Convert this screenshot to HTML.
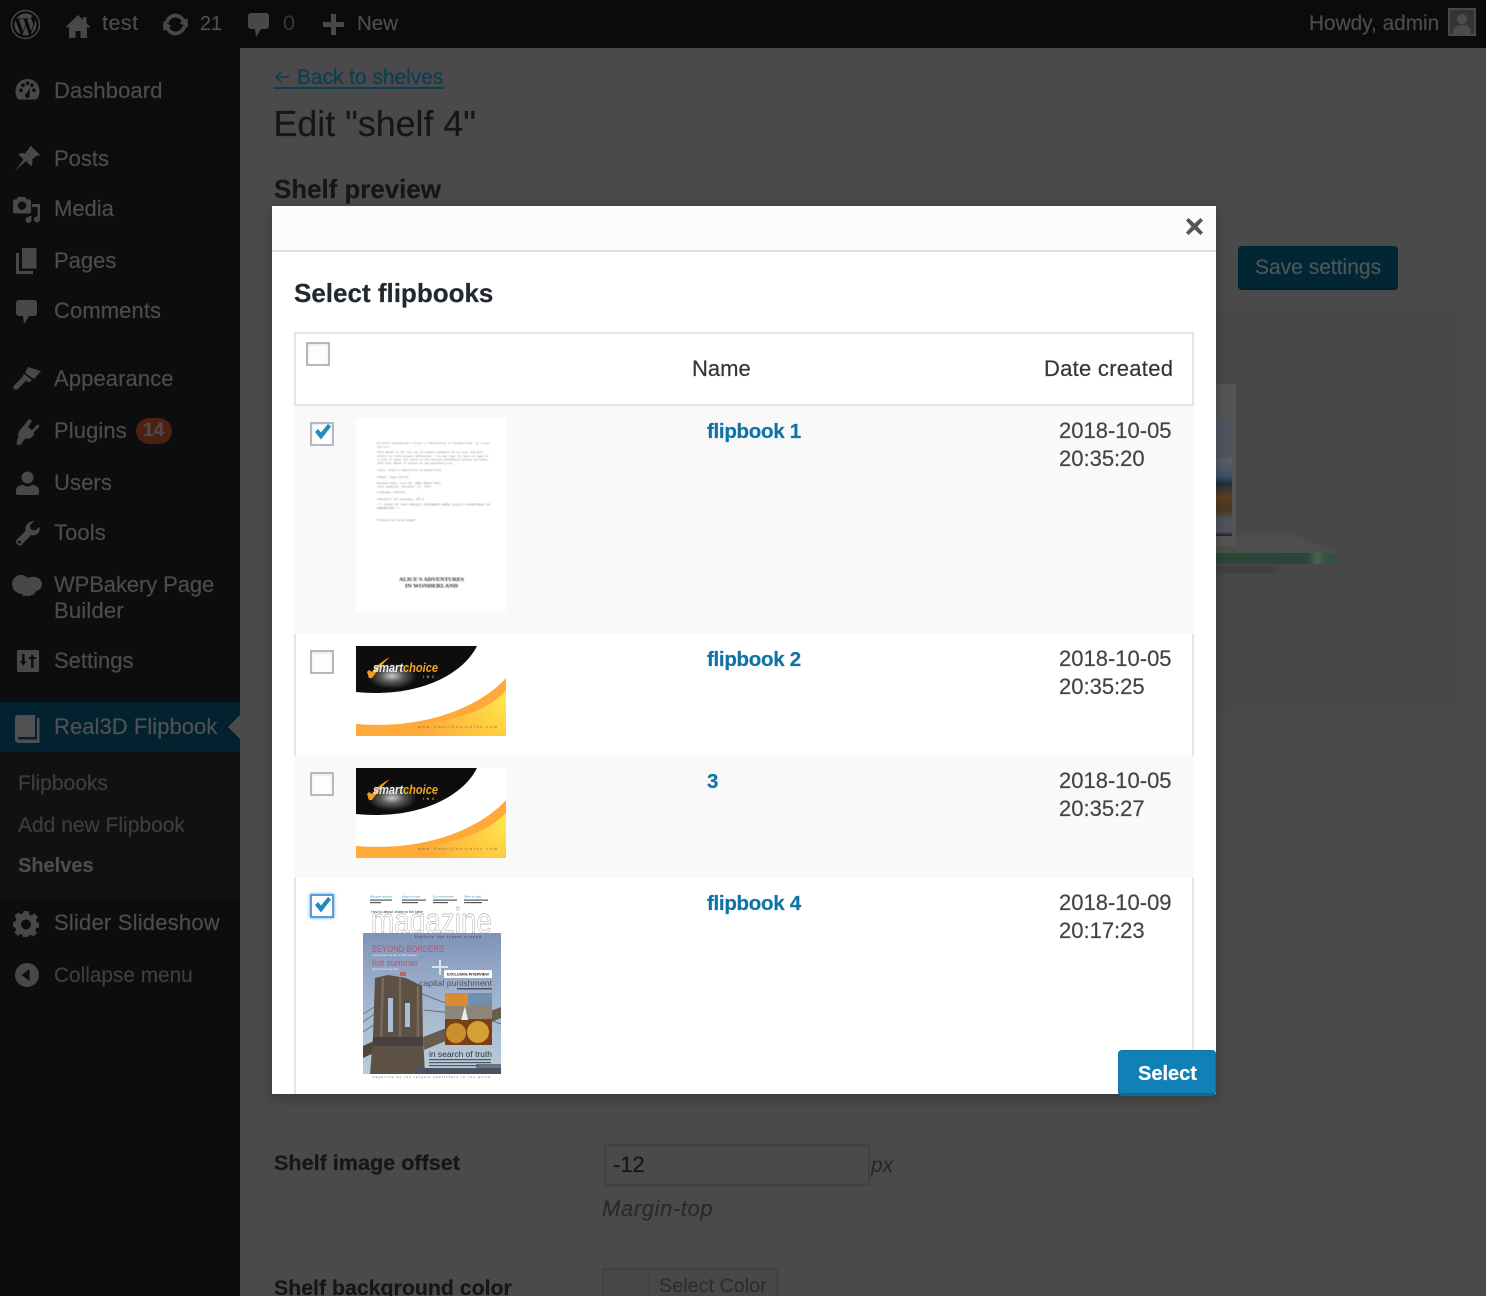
<!DOCTYPE html>
<html><head><meta charset="utf-8"><title>Edit shelf</title>
<style>
html,body{margin:0;padding:0;width:1486px;height:1296px;overflow:hidden;background:#4a4a4a}
body{position:relative;font-family:"Liberation Sans","DejaVu Sans",sans-serif}
.t{position:absolute;white-space:nowrap;line-height:30px;height:30px;-webkit-text-stroke:.2px}
.m{font-size:22px;color:#4b4c4e}
.s{font-size:21px;color:#3c3d3f}
.i{position:absolute;fill:#47484a}
.b{position:absolute;left:0;top:0}
.cb{position:absolute;width:20px;height:20px;border:2px solid #b4b9be;background:#fdfdfd;box-shadow:inset 0 1px 2px rgba(0,0,0,.1)}
.cb svg{position:absolute;left:0;top:0;overflow:visible}
.row{position:absolute;left:294px;width:900px;box-sizing:border-box}
.lnk{font-size:20.5px;font-weight:bold;color:#0f73a5;letter-spacing:-.3px}
.d{font-size:22px;color:#444}
</style></head><body>

<!-- admin bar -->
<div class="b" style="width:1486px;height:48px;background:#0a0b0d"></div>
<!-- sidebar -->
<div class="b" style="top:48px;width:240px;height:1248px;background:#0c0d0f"></div>
<div class="b" style="top:702px;width:240px;height:50px;background:#03222f"></div>
<div class="b" style="top:752px;width:240px;height:146px;background:#101113"></div>
<svg class="b" style="left:228px;top:715px" width="12" height="24"><path d="M12 0L0 12L12 24Z" fill="#4a4a4a"/></svg>

<!-- admin bar icons -->
<svg class="i" style="left:10px;top:9px" width="31" height="31" viewBox="0 0 31 31"><circle cx="15.5" cy="15.5" r="14" fill="none" stroke="#47484a" stroke-width="1.4"/><path d="M4.5 15.5c0 4.4 2.6 8.2 6.3 10L5.5 11.2a11 11 0 0 0-1 4.3zM23 15c0-1.400-.5-2.300-.9-3-.6-.9-1.100-1.700-1.100-2.600 0-1 .8-2 1.900-2h.2A11 11 0 0 0 6.500 9.500h.7c1.200 0 3-.1 3-.1.600 0 .7.800.1.900 0 0-.6.100-1.300.1l4 12 2.500-7.300-1.800-4.700c-.6 0-1.200-.1-1.200-.1-.6 0-.5-1-.0-.9 0 0 1.800.1 2.900.1s3-.1 3-.1c.6 0 .7.800.1.900 0 0-.6.100-1.300.1l4 11.900 1.100-3.600c.5-1.500.8-2.600.8-3.600zM15.700 16.500l-3.300 9.600a11 11 0 0 0 6.800-.2l-.1-.1zM25 10.300c0 .4.100.8.100 1.200 0 1.100-.2 2.400-.8 4l-3.400 9.700A11 11 0 0 0 25 10.300z"/></svg>
<svg class="i" style="left:66px;top:14px" width="24" height="24" viewBox="0 0 24 24"><path d="M12 1L0 12.500l1.500 1.500L3 12.700V24h6.500v-7h5v7H21V12.700l1.500 1.300 1.500-1.500-3.500-3.300V3h-3.500v3z"/></svg>
<svg class="i" style="left:162px;top:13px" width="27" height="23" viewBox="3 2 21 19"><path d="M13.500 2.500c3.400 0 6.300 2 7.700 4.900l2.300-1.400.2 8-6.900-3.800 2-1.200c-1-2-3-3.300-5.300-3.300-2.900 0-5.300 2.100-5.900 4.900L4.500 9.900C5.700 5.700 9.200 2.500 13.500 2.500zM22.500 13.100c-1.200 4.200-4.700 7.400-9 7.400-3.400 0-6.300-2-7.700-4.900l-2.300 1.400-.2-8 6.900 3.800-2 1.200c1 2 3 3.300 5.300 3.300 2.900 0 5.300-2.100 5.900-4.900z"/></svg>
<svg class="i" style="left:248px;top:13px" width="21" height="24" viewBox="0 0 21 24"><path d="M3 0h15a3 3 0 0 1 3 3v10a3 3 0 0 1-3 3h-5l-5 8-1-8H3a3 3 0 0 1-3-3V3a3 3 0 0 1 3-3z"/></svg>
<svg class="i" style="left:323px;top:14px" width="21" height="21" viewBox="0 0 21 21"><path d="M8 0h5v8h8v5h-8v8H8v-8H0V8h8z"/></svg>

<div class="t" style="left:102px;top:8px;font-size:21.5px;color:#4b4c4e;letter-spacing:.5px">test</div>
<div class="t" style="left:200px;top:9px;font-size:20px;color:#4b4c4e;letter-spacing:-.2px">21</div>
<div class="t" style="left:283px;top:8px;font-size:21.5px;color:#333436">0</div>
<div class="t" style="left:357px;top:9px;font-size:20.5px;color:#4b4c4e">New</div>
<div class="t" style="left:1309px;top:9px;font-size:20.8px;color:#4b4c4e">Howdy, admin</div>
<div class="b" style="left:1448px;top:8px;width:28px;height:28px;background:#47484a;overflow:hidden">
<svg width="28" height="28" viewBox="0 0 28 28"><rect x="2" y="2" width="24" height="24" fill="#333436"/><circle cx="14" cy="11" r="5" fill="#4c4c4d"/><path d="M5 26c0-7 4-9 9-9s9 2 9 9z" fill="#4c4c4d"/></svg></div>

<!-- sidebar icons -->
<svg class="i" style="left:15px;top:79px" width="25" height="22" viewBox="0 0 25 22"><path d="M12.500 0A12 12 0 0 0 .5 12c0 3.500 1.200 6.500 3 8.500h18c1.800-2 3-5 3-8.500a12 12 0 0 0-12-12zM6 13a1.800 1.800 0 1 1 0-3.600A1.800 1.800 0 0 1 6 13zm2-5a1.800 1.800 0 1 1 0-3.600A1.800 1.800 0 0 1 8 8zm4.500-2a1.800 1.800 0 1 1 0-3.600 1.800 1.800 0 0 1 0 3.600zm2 12a2.500 2.500 0 0 1-4.500-1.500c0-1.500 1.500-2.300 2-2.800l3-5-.5 6c0 1 .5 2 0 3.300zM17 8a1.800 1.800 0 1 1 0-3.600A1.800 1.800 0 0 1 17 8zm2 5a1.800 1.800 0 1 1 0-3.600 1.800 1.800 0 0 1 0 3.600z"/></svg>
<svg class="i" style="left:14px;top:146px" width="26" height="26" viewBox="0 0 26 26"><path d="M17 0l9 9-2 1-1-.5-5 4c1 2.500.5 5-1 6.500l-5-5L1 25l8.500-11.500-5-5c1.500-1.500 4-2 6.500-1l4-5L15 1.500z"/></svg>
<svg class="i" style="left:13px;top:197px" width="28" height="28" viewBox="0 0 28 28"><path d="M5 0h7l2 2.500h2a2 2 0 0 1 2 2v10a2 2 0 0 1-2 2H2a2 2 0 0 1-2-2v-10a2 2 0 0 1 2-2h1.500zM9 4.500a4.200 4.200 0 1 0 0 8.400 4.200 4.200 0 0 0 0-8.400z"/><path d="M19 7h8v15.500a3 3 0 1 1-2.500-3V10H19z"/><path d="M18.500 19v4a3 3 0 1 1-2.500-3v-1z"/></svg>
<svg class="i" style="left:16px;top:248px" width="21" height="26" viewBox="0 0 21 26"><path d="M6 0h14.500v20.500H6z"/><path d="M0 5h3v18h14v3H0z"/></svg>
<svg class="i" style="left:16px;top:300px" width="21" height="24" viewBox="0 0 21 24"><path d="M3 0h15a3 3 0 0 1 3 3v10a3 3 0 0 1-3 3h-5l-5 8-1-8H3a3 3 0 0 1-3-3V3a3 3 0 0 1 3-3z"/></svg>
<svg class="i" style="left:13px;top:367px" width="28" height="24" viewBox="0 0 28 24"><path d="M15 0l13 4-7 8-9-6zM11 7l8 6-3 2.500-3-2L5 22a3 3 0 0 1-4.500-.5C0 20.500 0 19.500 1 18.500L9 10.500z"/></svg>
<svg class="i" style="left:15px;top:419px" width="25" height="26" viewBox="0 0 25 26"><path d="M14 0l3 2-4 6 4 3 6-6 1.500 2.500-6 6 1 1c-2 4-5 6-9 5l-1 1-4 5.500-4-.5 1-6 1-1c-1-3 0-6 2-8z"/></svg>
<svg class="i" style="left:16px;top:471px" width="23" height="24" viewBox="0 0 23 24"><circle cx="11.500" cy="6.500" r="6"/><path d="M0 19c0-3 3-4.500 7-5.500 1 1.500 3 2 4.500 2s3.500-.5 4.500-2c4 1 7 2.500 7 5.500v3a2 2 0 0 1-2 2H2a2 2 0 0 1-2-2z"/></svg>
<svg class="i" style="left:15px;top:521px" width="25" height="25" viewBox="0 0 25 25"><path d="M19 0l-4 4.500 1 4 4 1L24.500 6c.5 3-.5 6-3 7.500-2 1-4 1-5.500.5L7 23.500a3.200 3.200 0 0 1-5-.5c-1-1-1.200-3 0-4.500L10.500 10C10 8 10.200 5.500 12 3.500 14 1 16.500 0 19 0zM4.500 19.500a1.500 1.500 0 1 0 0 3 1.500 1.500 0 0 0 0-3z"/></svg>
<svg class="i" style="left:12px;top:575px" width="30" height="24" viewBox="0 0 30 24"><path d="M9 0c3 0 5 1 6.500 3 2-1 5-1.500 8-1 4 1 6.500 4 6.500 7 0 4-3 6.500-6 7-1 3-3 4.500-5 4-1 1-3 1.500-5 .5-1 .5-3 1-4 .5l1.500-1.500C7 19 3.500 17.500 1.500 14 0 11.500-.5 8 1 5 2.500 2 5.500 0 9 0z"/></svg>
<svg class="i" style="left:17px;top:650px" width="22" height="22" viewBox="0 0 22 22"><path fill-rule="evenodd" d="M1 0h20a1 1 0 0 1 1 1v20a1 1 0 0 1-1 1H1a1 1 0 0 1-1-1V1a1 1 0 0 1 1-1zM5 4v7H3l3.200 5 3.200-5H7.500V4zM14 5v2h-2v2h2v9h2.500V9H19V7h-2.500V5z"/></svg>
<svg class="i" style="left:15px;top:715px;fill:#4f5052" width="25" height="28" viewBox="0 0 25 28"><path d="M3 0h17v22H4.500c-2 0-2 2.500 0 2.500H22V3h2.500v25H4c-2.500 0-4-1.500-4-4V3a3 3 0 0 1 3-3z"/></svg>
<svg class="i" style="left:13px;top:911px" width="26" height="26" viewBox="0 0 26 26"><path fill-rule="evenodd" d="M10.500 0h5l.7 3.500 2.300 1L21.500 2.500 25 6l-2.200 3 1 2.300L26 11.500v5l-2.700.5-1 2.300L24 22l-3.500 3.500-2.700-1.800-2.300 1-.5 1.300h-5l-.5-2.300-2.300-1L5 25l-3.500-3.500 1.700-2.700-1-2.300L0 16v-5l2.300-.5 1-2.300L1.500 5 5 1.500l2.700 1.800 2.300-1zM13 8.500a5 5 0 1 0 0 10 5 5 0 0 0 0-10z"/></svg>
<svg class="i" style="left:15px;top:963px" width="24" height="24" viewBox="0 0 24 24"><path fill-rule="evenodd" d="M12 0a12 12 0 1 1 0 24 12 12 0 0 1 0-24zM14.500 6l-8 6 8 6z"/></svg>

<!-- sidebar text -->
<div class="t m" style="left:54px;top:76px;letter-spacing:.1px">Dashboard</div>
<div class="t m" style="left:54px;top:144px">Posts</div>
<div class="t m" style="left:54px;top:194px">Media</div>
<div class="t m" style="left:54px;top:246px">Pages</div>
<div class="t m" style="left:54px;top:296px;letter-spacing:.1px">Comments</div>
<div class="t m" style="left:54px;top:364px;letter-spacing:.1px">Appearance</div>
<div class="t m" style="left:54px;top:416px;letter-spacing:.1px">Plugins</div>
<div class="b" style="left:136px;top:418px;width:36px;height:26px;border-radius:13px;background:#4d2012"></div>
<div class="t" style="left:143px;top:416px;font-size:19px;font-weight:bold;color:#4b4c4e">14</div>
<div class="t m" style="left:54px;top:468px;letter-spacing:.1px">Users</div>
<div class="t m" style="left:54px;top:518px;letter-spacing:.1px">Tools</div>
<div class="t m" style="left:54px;top:570px;letter-spacing:-.1px">WPBakery Page</div>
<div class="t m" style="left:54px;top:596px;letter-spacing:.2px">Builder</div>
<div class="t m" style="left:54px;top:646px">Settings</div>
<div class="t m" style="left:54px;top:712px;color:#505153;letter-spacing:.05px">Real3D Flipbook</div>
<div class="t s" style="left:18px;top:769px">Flipbooks</div>
<div class="t s" style="left:18px;top:811px">Add new Flipbook</div>
<div class="t s" style="left:18px;top:851px;font-size:20px;font-weight:bold;color:#4b4c4e">Shelves</div>
<div class="t m" style="left:54px;top:908px;letter-spacing:.2px">Slider Slideshow</div>
<div class="t s" style="left:54px;top:961px;font-size:20.8px;color:#3e3f41">Collapse menu</div>

<!-- page content behind overlay -->
<svg class="b" style="left:274px;top:70px" width="17" height="14" viewBox="0 0 17 14"><path d="M15.500 7H2M7.500 1.500L2 7l5.500 5.500" fill="none" stroke="#0a3d55" stroke-width="1.600"/></svg>
<div class="t" style="left:297px;top:63px;font-size:20.9px;color:#0a3d55">Back to shelves</div>
<div class="b" style="left:274px;top:87px;width:170px;height:2px;background:#0a3d55"></div>
<div class="t" style="left:273.5px;top:102px;font-size:35.8px;line-height:44px;height:44px;color:#151618">Edit "shelf 4"</div>
<div class="t" style="left:274px;top:175px;font-size:25.9px;font-weight:bold;color:#151618">Shelf preview</div>

<div class="b" style="left:1216px;top:310px;width:242px;height:400px;background:#484848"></div>
<div class="b" style="left:1216px;top:384px;width:20px;height:162px;background:#555"></div>
<div class="b" style="left:1216px;top:420px;width:16px;height:116px;background:linear-gradient(#4f5560,#4e545c 30%,#5a5e62 35%,#3f5266 48%,#1f2f3d 55%,#5b4021 66%,#4a3820 78%,#4c5258 85%,#50565c 96%,#222 100%)"></div>
<svg class="b" style="left:1216px;top:530px;overflow:visible" width="124" height="50" viewBox="0 0 124 50"><defs><filter id="bl"><feGaussianBlur stdDeviation="3"/></filter><linearGradient id="gl" x1="0" x2="1" y1="0" y2="0"><stop offset="0" stop-color="#2c4637"/><stop offset=".75" stop-color="#2a4535"/><stop offset=".84" stop-color="#4a6253"/><stop offset=".9" stop-color="#34533f"/><stop offset="1" stop-color="#35523f"/></linearGradient></defs>
<rect x="0" y="36" width="62" height="7" fill="#3c3c3c" filter="url(#bl)"/>
<path d="M20 5H79L121 23H0V16H20Z" fill="#4d4f4e"/><rect x="0" y="23" width="121" height="11" fill="url(#gl)"/></svg>

<div class="b" style="left:1238px;top:246px;width:160px;height:44px;box-sizing:border-box;border-radius:4px;background:#032634;border-bottom:3px solid #02202c"></div>
<div class="t" style="left:1255px;top:253px;font-size:21px;color:#4d5559">Save settings</div>

<div class="t" style="left:274px;top:1148px;font-size:21.6px;font-weight:bold;color:#151618">Shelf image offset</div>
<div class="b" style="left:604px;top:1144px;width:266px;height:42px;box-sizing:border-box;border:2px solid #414141;background:#4a4a4a"></div>
<div class="t" style="left:613px;top:1150px;font-size:22px;color:#151618">-12</div>
<div class="t" style="left:871px;top:1151px;font-size:21px;font-style:italic;color:#2a2a2a">px</div>
<div class="t" style="left:602px;top:1194px;font-size:22px;font-style:italic;color:#2a2a2a;letter-spacing:.6px">Margin-top</div>
<div class="t" style="left:274px;top:1273px;font-size:21.3px;font-weight:bold;color:#151618">Shelf background color</div>
<div class="b" style="left:602px;top:1268px;width:176px;height:40px;box-sizing:border-box;border:2px solid #414141;border-radius:4px;background:#484848"></div>
<div class="b" style="left:648px;top:1270px;width:2px;height:30px;background:#414141"></div>
<div class="t" style="left:659px;top:1271px;font-size:19.8px;color:#2e2e2e">Select Color</div>

<!-- modal -->
<div class="b" style="left:272px;top:206px;width:944px;height:888px;background:#fff;box-shadow:0 4px 12px rgba(0,0,0,.25);overflow:hidden">
  <div class="b" style="width:944px;height:44px;background:#fcfcfc;border-bottom:2px solid #ddd"></div>
</div>
<svg class="b" style="left:1186px;top:218px" width="17" height="17" viewBox="0 0 17 17"><path d="M2.500 0L8.500 5.500 14.500 0 17 2.500 11.500 8.500 17 14.500 14.500 17 8.500 11.500 2.500 17 0 14.500 5.500 8.500 0 2.500Z" fill="#555"/></svg>
<div class="t" style="left:294px;top:278px;font-size:26px;font-weight:bold;color:#23282d">Select flipbooks</div>

<!-- table head -->
<div class="row" style="top:332px;height:74px;border:2px solid #e5e5e5;background:#fff"></div>
<div class="cb" style="left:306px;top:342px"></div>
<div class="t" style="left:692px;top:354px;font-size:22px;color:#32373c">Name</div>
<div class="t" style="left:1044px;top:354px;font-size:22px;color:#32373c;letter-spacing:.27px">Date created</div>

<!-- rows -->
<div class="row" style="top:406px;height:228px;background:#f9f9f9"></div>
<div class="row" style="top:634px;height:122px;background:#fff;border-left:2px solid #e5e5e5;border-right:2px solid #e5e5e5"></div>
<div class="row" style="top:756px;height:122px;background:#f9f9f9"></div>
<div class="row" style="top:878px;height:216px;background:#fff;border-left:2px solid #e5e5e5;border-right:2px solid #e5e5e5"></div>

<div class="cb" style="left:310px;top:422px"><svg width="20" height="20" viewBox="0 0 20 20"><path d="M3 8l3-3 3 3.500L16 0l3 2.500L9 15.500z" fill="#1e8cbe"/></svg></div>
<div class="cb" style="left:310px;top:650px"></div>
<div class="cb" style="left:310px;top:772px"></div>
<div class="cb" style="left:310px;top:894px;border-color:#5b9dd9;box-shadow:0 0 3px rgba(30,140,190,.8)"><svg width="20" height="20" viewBox="0 0 20 20"><path d="M3 9l3-3 3 3.500L16 1l3 2.500L9 16.500z" fill="#1e8cbe"/></svg></div>

<!-- thumb 1 -->
<div class="b" style="left:356px;top:418px;width:150px;height:194px;background:#fff;overflow:hidden">
<svg width="150" height="194" viewBox="0 0 150 194" style="font-family:'Liberation Mono',monospace;font-size:3.100px;fill:#8c8c8c;filter:blur(.4px)">
<text x="21" y="26" textLength="113">Project Gutenberg's Alice's Adventures in Wonderland, by Lewis</text><text x="21" y="30">Carroll</text>
<text x="21" y="35" textLength="106">This eBook is for the use of anyone anywhere at no cost and with</text><text x="21" y="39" textLength="112">almost no restrictions whatsoever. You may copy it, give it away or</text><text x="21" y="42.500" textLength="110">re-use it under the terms of the Project Gutenberg License included</text><text x="21" y="46" textLength="75">with this eBook or online at www.gutenberg.org</text>
<text x="21" y="53" textLength="64">Title: Alice's Adventures in Wonderland</text><text x="21" y="60" textLength="32">Author: Lewis Carroll</text><text x="21" y="66" textLength="64">Release Date: June 25, 2008 [EBook #11]</text><text x="21" y="69.500" textLength="54">Last updated: December 17, 2014</text><text x="21" y="75" textLength="28">Language: English</text><text x="21" y="82" textLength="47">Character set encoding: UTF-8</text><text x="21" y="87.500" textLength="113">*** START OF THIS PROJECT GUTENBERG EBOOK ALICE'S ADVENTURES IN</text><text x="21" y="91" textLength="24">WONDERLAND ***</text><text x="21" y="103" textLength="39">Produced by David Widger</text>
<text x="43" y="163" textLength="65" lengthAdjust="spacingAndGlyphs" style="font:bold 5.400px 'Liberation Serif',serif;fill:#222">ALICE'S ADVENTURES</text><text x="49" y="169.500" textLength="53" lengthAdjust="spacingAndGlyphs" style="font:bold 5.400px 'Liberation Serif',serif;fill:#222">IN WONDERLAND</text>
</svg></div>

<!-- thumb 2 / 3 -->
<svg class="b" style="left:356px;top:646px" width="150" height="90" viewBox="0 0 150 90">
<defs>
<radialGradient id="y" gradientUnits="userSpaceOnUse" cx="150" cy="55" r="85"><stop offset="0" stop-color="#ffe64a"/><stop offset=".45" stop-color="#ffc83f"/><stop offset="1" stop-color="#ffab3a"/></radialGradient>
<radialGradient id="g" cx=".5" cy=".5" r=".5"><stop offset="0" stop-color="#c4c8c8"/><stop offset=".45" stop-color="#5a5c5c"/><stop offset="1" stop-color="#0c0c0c"/></radialGradient>
<filter id="sf"><feGaussianBlur stdDeviation=".25"/></filter>
<g id="card" filter="url(#sf)">
<rect width="150" height="90" fill="#fff"/>
<path d="M0 0H121C106 30 60 52 0 46Z" fill="#0c0c0c"/>
<ellipse cx="36" cy="30" rx="25" ry="13" fill="url(#g)"/>
<path d="M0 78C70 84 125 60 150 32V90H0Z" fill="#ffa93a"/>
<path d="M0 81C70 84 130 70 150 44V90H0Z" fill="url(#y)"/>
<path d="M11 26L13 24 16 26Q22 17 34 11 24 20 16 32L13 32Z" fill="#f39c1f"/>
<text x="17" y="26" style="font:italic bold 13px 'Liberation Sans',sans-serif;fill:#eee" textLength="30" lengthAdjust="spacingAndGlyphs">smart</text>
<text x="47" y="26" style="font:italic bold 13px 'Liberation Sans',sans-serif;fill:#f5a623" textLength="35" lengthAdjust="spacingAndGlyphs">choice</text>
<text x="67" y="32" style="font:bold 3.500px 'Liberation Sans',sans-serif;fill:#f5a623" textLength="15">INC.</text>
<text x="62" y="82" style="font:3.500px 'Liberation Sans',sans-serif;fill:#7a6a3a" textLength="79">www.SmartChoiceInc.com</text>
</g></defs>
<use href="#card"/></svg>
<svg class="b" style="left:356px;top:768px" width="150" height="90" viewBox="0 0 150 90"><use href="#card"/></svg>

<!-- thumb 4 -->
<svg class="b" style="left:356px;top:894px;filter:blur(.35px)" width="150" height="190" viewBox="0 0 150 190">
<defs><linearGradient id="sky" x1="0" y1="0" x2="0" y2="1"><stop offset="0" stop-color="#7f93b8"/><stop offset=".5" stop-color="#a3b6d0"/><stop offset="1" stop-color="#b9ccd8"/></linearGradient></defs>
<rect width="150" height="190" fill="#fff"/>
<g style="font:2.800px 'Liberation Sans',sans-serif"><text x="14" y="3.500" fill="#39b">Windows optional</text><text x="46" y="3.500" fill="#39b">Kings and cars</text><text x="77" y="3.500" fill="#39b">Our environment</text><text x="108" y="3.500" fill="#39b">Sleep on gold</text></g>
<rect x="14" y="5.500" width="22" height="1.200" fill="#555"/><rect x="14" y="8" width="11" height="1.200" fill="#555"/><rect x="46" y="5.500" width="24" height="1.200" fill="#555"/><rect x="46" y="8" width="16" height="1.200" fill="#555"/><rect x="77" y="5.500" width="24" height="1.200" fill="#555"/><rect x="77" y="8" width="15" height="1.200" fill="#555"/><rect x="108" y="5.500" width="24" height="1.200" fill="#555"/><rect x="108" y="8" width="18" height="1.200" fill="#555"/>
<text x="15" y="19" textLength="52" style="font:3.800px 'Liberation Sans',sans-serif;fill:#444">How to attract charm to the table</text>
<text x="15" y="39" style="font:36px 'Liberation Sans',sans-serif;fill:#fff;stroke:#888;stroke-width:.4" textLength="121" lengthAdjust="spacingAndGlyphs">magazine</text>
<rect x="7" y="39" width="138" height="141" fill="url(#sky)"/>
<text x="59" y="44" textLength="66" style="font:3.500px 'Liberation Sans',sans-serif;fill:#334">Explore the travel around</text>
<text x="16" y="58" style="font:9px 'Liberation Sans',sans-serif;fill:#b5596a" textLength="72" lengthAdjust="spacingAndGlyphs">BEYOND BORDERS</text>
<text x="16" y="62" style="font:3px 'Liberation Sans',sans-serif;fill:#eef">A travel around the world's largest</text>
<text x="16" y="72" style="font:9.500px 'Liberation Sans',sans-serif;fill:#b5596a" textLength="46" lengthAdjust="spacingAndGlyphs">hot summer</text>
<text x="16" y="76" style="font:3px 'Liberation Sans',sans-serif;fill:#eef">find out this sun hat</text>
<path d="M83 66h2v6h7v2h-7v7h-2v-7h-7v-2h7z" fill="#dfe5ee"/>
<rect x="88" y="76" width="48" height="8" rx="1" fill="#fff"/><text x="91" y="81.500" textLength="42" style="font:bold 4px 'Liberation Sans',sans-serif;fill:#333">EXCLUSIVE INTERVIEW</text>
<text x="63" y="92" style="font:8px 'Liberation Sans',sans-serif;fill:#555" textLength="73" lengthAdjust="spacingAndGlyphs">capital punishment</text>
<rect x="101" y="94" width="35" height="1.500" fill="#556"/>
<!-- bridge -->
<path d="M7 120L20 112M7 128L21 118M7 138L22 128M66 100L145 130M68 116L145 124" stroke="#5a564e" stroke-width=".7" fill="none"/>
<path d="M67 143L145 113V124L68 156Z" fill="#6a5c4c"/>
<path d="M7 152L20 146V158L7 164Z" fill="#4f4538"/>
<path d="M19 84L32 81 50 84 66 92 67 143 69 180H14L17 143Z" fill="#5c5144"/>
<path d="M32 104h5v34h-5zM49 109h5v24h-5z" fill="#a8bdd6"/>
<path d="M27 84L25 143M44 84L44 143M62 92L62 143" stroke="#79695a" stroke-width="2.500" fill="none"/>
<path d="M17 143H67V152H17z" fill="#48403a"/>
<rect x="44" y="78" width="6" height="4" fill="#b36a6a"/>
<rect x="60" y="174" width="85" height="6" fill="#4a5160"/><rect x="120" y="170" width="25" height="4" fill="#6a7483"/>
<rect x="89" y="99" width="47" height="52" fill="#7b3f18"/>
<rect x="89" y="99" width="47" height="13" fill="#d98c2f"/>
<path d="M112 99h24v20l-24-3z" fill="#6f90ac"/>
<rect x="89" y="112" width="47" height="13" fill="#8d8578"/>
<path d="M105 126l4-14 3 14z" fill="#e9ecef"/>
<circle cx="100" cy="139" r="10" fill="#c98f2e"/><circle cx="122" cy="138" r="11" fill="#d4a035"/>
<text x="73" y="163" style="font:8px 'Liberation Sans',sans-serif;fill:#333" textLength="63" lengthAdjust="spacingAndGlyphs">in search of truth</text>
<rect x="73" y="165" width="62" height="1.200" fill="#556"/><rect x="73" y="168" width="62" height="1.200" fill="#556"/><rect x="73" y="171" width="50" height="1.200" fill="#556"/>
<text x="16" y="184" style="font:3px 'Liberation Sans',sans-serif;fill:#555" textLength="118">magazine by the largest publishers in the world</text>
</svg>

<!-- row text -->
<div class="t lnk" style="left:707px;top:417px">flipbook 1</div>
<div class="t lnk" style="left:707px;top:645px">flipbook 2</div>
<div class="t lnk" style="left:707px;top:767px">3</div>
<div class="t lnk" style="left:707px;top:889px">flipbook 4</div>
<div class="t d" style="left:1059px;top:416px">2018-10-05</div><div class="t d" style="left:1059px;top:444px">20:35:20</div>
<div class="t d" style="left:1059px;top:644px">2018-10-05</div><div class="t d" style="left:1059px;top:672px">20:35:25</div>
<div class="t d" style="left:1059px;top:766px">2018-10-05</div><div class="t d" style="left:1059px;top:794px">20:35:27</div>
<div class="t d" style="left:1059px;top:888px">2018-10-09</div><div class="t d" style="left:1059px;top:916px">20:17:23</div>

<!-- select button -->
<div class="b" style="left:1118px;top:1050px;width:98px;height:46px;box-sizing:border-box;border-radius:4px;background:#1081b7;border:1px solid #0b72a3;border-bottom:3px solid #0a6a99"></div>
<div class="t" style="left:1138px;top:1059px;font-size:20px;font-weight:bold;color:#fff">Select</div>

</body></html>
